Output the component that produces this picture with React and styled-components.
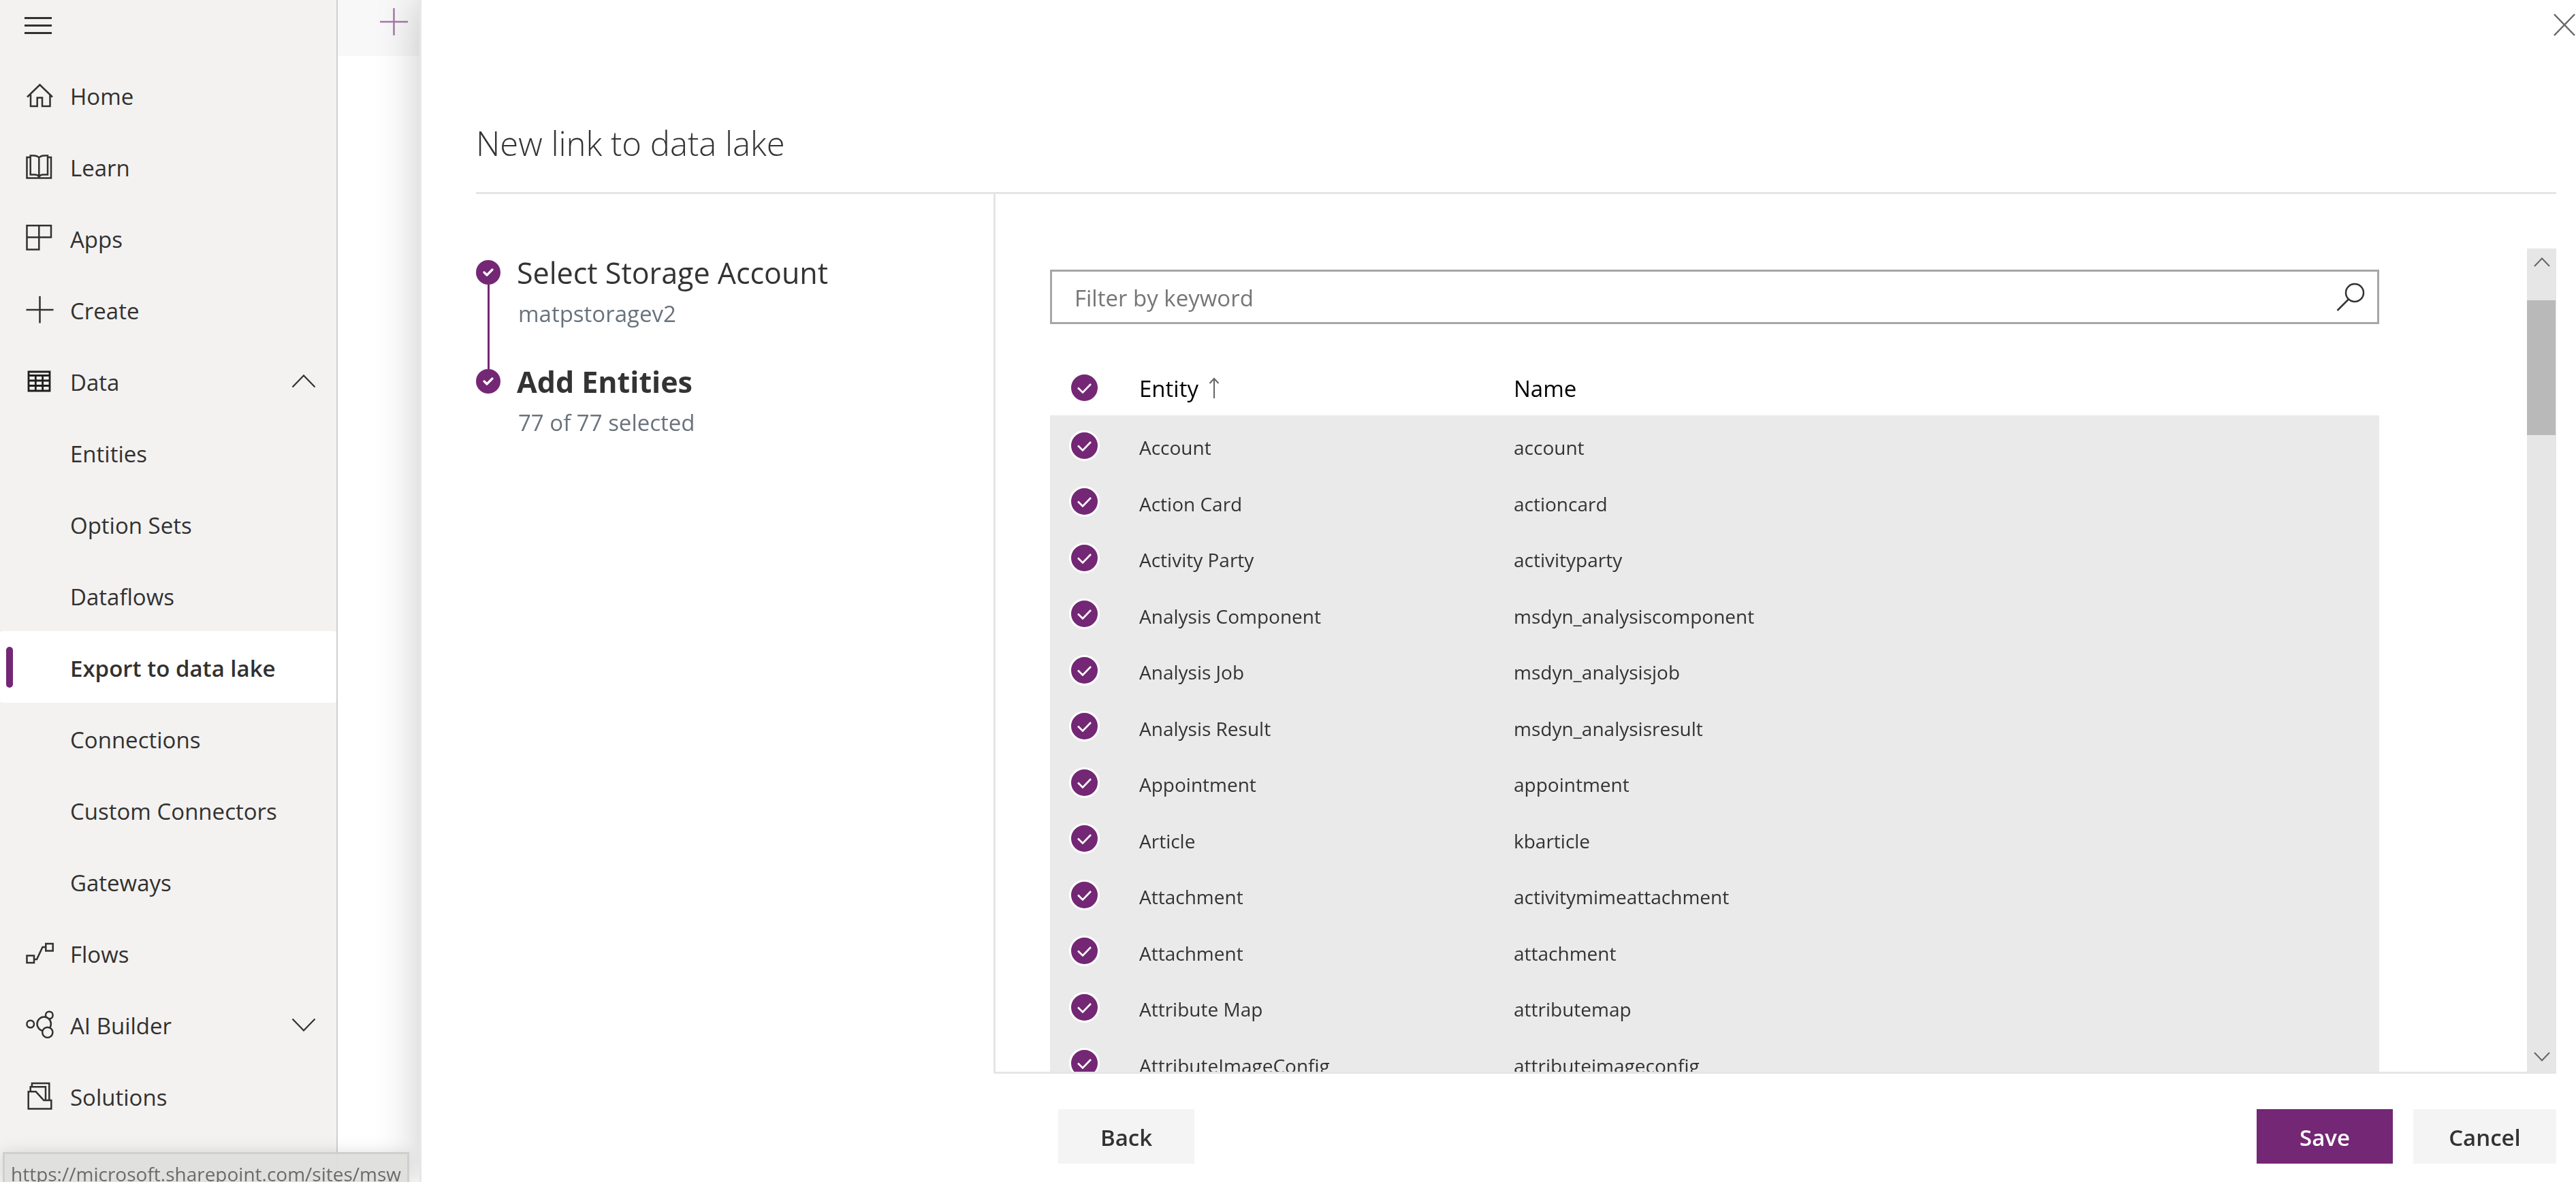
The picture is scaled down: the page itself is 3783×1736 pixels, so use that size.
import React from "react";
import styled, { createGlobalStyle } from "styled-components";

const GlobalStyle = createGlobalStyle`
  *, *::before, *::after { box-sizing: border-box; }
  html, body, #root { height: 100%; }
  body {
    margin: 0;
    overflow: hidden;
    background: #ffffff;
    color: #323130;
    font-family: "Open Sans", "Noto Sans", sans-serif;
    font-size: 33px;
  }
  button, input { font: inherit; color: inherit; }
  button { border: 0; padding: 0; background: none; cursor: pointer; }
  h1, h2, p, ul, ol { margin: 0; padding: 0; }
  ul, ol { list-style: none; }
`;

const Shell = styled.div`
  display: flex;
  height: 100vh;
`;

/* ---------- Sidebar ---------- */

const Sidebar = styled.nav`
  flex: none;
  width: 496px;
  border-right: 2px solid #d2d0ce;
  background: #f3f2f1;
`;

const MenuButton = styled.button`
  display: flex;
  align-items: center;
  width: 100%;
  height: 87px;
  padding: 0 0 12px 36px;
`;

const NavRow = styled.a`
  position: relative;
  display: flex;
  align-items: center;
  height: 105px;
  padding: 0 30px 0 38px;
  color: #323130;
  text-decoration: none;
  border-radius: 4px;
  background: ${(p) => (p.$selected ? "#ffffff" : "transparent")};
  font-weight: ${(p) => (p.$selected ? 600 : 400)};

  &::before {
    content: "";
    display: ${(p) => (p.$selected ? "block" : "none")};
    position: absolute;
    left: 9px;
    top: 23px;
    width: 10px;
    height: 60px;
    border-radius: 5px;
    background: #742774;
  }
`;

const NavIcon = styled.span`
  flex: none;
  display: flex;
  width: 65px;
`;

const NavLabel = styled.span`
  flex: 1;
  padding-top: 3px;
  white-space: nowrap;
`;

const Workspace = styled.main`
  flex: 1;
`;

const CommandBar = styled.div`
  height: 82px;
  padding: 10px 0 0 62px;
  background: #f8f8f8;
`;

/* ---------- Panel ---------- */

const Panel = styled.section`
  position: fixed;
  inset: 0 0 0 616px;
  display: flex;
  flex-direction: column;
  padding: 0 29px 27px 80px;
  border-left: 3px solid #e8e8e8;
  background: #ffffff;
  box-shadow: 0 0 60px rgba(0, 0, 0, 0.22);
`;

const CloseButton = styled.button`
  position: absolute;
  top: 20px;
  right: 1px;
  display: flex;
`;

const PanelHeader = styled.header`
  flex: none;
  height: 285px;
  padding-top: 176px;
  border-bottom: 3px solid #e5e5e5;
`;

const Title = styled.h1`
  font-size: 49px;
  line-height: 68px;
  font-weight: 300;
  color: #333333;
`;

const Body = styled.div`
  flex: 1;
  min-height: 0;
  display: flex;
`;

const Steps = styled.ol`
  flex: none;
  width: 760px;
  padding-top: 86px;
`;

const Step = styled.li`
  display: flex;
  gap: 24px;
  height: 160px;
`;

const StepRail = styled.div`
  display: flex;
  flex-direction: column;
  align-items: center;
  padding-top: 11px;
  margin-bottom: -11px;

  &::after {
    content: "";
    display: ${(p) => (p.$last ? "none" : "block")};
    flex: 1;
    width: 3px;
    background: #742774;
  }
`;

const StepTitle = styled.h2`
  font-size: 43px;
  line-height: 60px;
  font-weight: ${(p) => (p.$current ? 700 : 400)};
  color: #333333;
`;

const StepNote = styled.p`
  padding: 5px 0 0 2px;
  line-height: 50px;
  color: #69737d;
`;

const Content = styled.div`
  flex: 1;
  min-width: 0;
  display: flex;
  padding-top: 80px;
  border-left: 3px solid #e5e5e5;
  border-bottom: 3px solid #e5e5e5;
`;

const Scroller = styled.div`
  flex: 1;
  overflow: hidden;
  padding: 31px 217px 0 80px;
`;

const SearchBox = styled.label`
  display: flex;
  align-items: center;
  height: 80px;
  padding: 0 18px 0 33px;
  border: 3px solid #a6a6a6;
`;

const SearchInput = styled.input`
  flex: 1;
  border: 0;
  outline: 0;
  padding: 2px 0 0;
  background: transparent;
  &::placeholder { color: #767676; opacity: 1; }
`;

const Table = styled.table`
  width: 100%;
  margin-top: 54px;
  border-collapse: collapse;
  table-layout: fixed;
`;

const HeadCell = styled.th`
  width: ${(p) => p.$width};
  height: 80px;
  padding: 0;
  text-align: left;
  font-weight: 400;
  color: #000000;
`;

const HeadCheckCell = styled(HeadCell)`
  padding: 0 0 2px 28px;
`;

const HeadSort = styled.button`
  display: flex;
  align-items: center;
  gap: 15px;
`;

const Row = styled.tr`
  height: 82px;
  background: #eaeaea;
  font-size: 28px;
  color: #333333;
  &:nth-child(even) { height: 83px; }
`;

const CheckCell = styled.td`
  padding: 6px 0 0 28px;
`;

const Cell = styled.td`
  padding: 12px 0 0;
  white-space: nowrap;
`;

const CheckLabel = styled.label`
  display: grid;
  width: 45px;
  height: 45px;
  place-items: center;
  > * { grid-area: 1 / 1; }
  svg { pointer-events: none; }
`;

const CheckInput = styled.input`
  appearance: none;
  width: 45px;
  height: 45px;
  margin: 0;
  border: 3px solid #ffffff;
  border-radius: 50%;
  background: #742774;
`;

const Scrollbar = styled.div`
  flex: none;
  display: flex;
  flex-direction: column;
  width: 43px;
  background: #e6e6e6;
`;

const ScrollButton = styled.button`
  display: flex;
  justify-content: center;
  padding: ${(p) => (p.$down ? "0 0 14px" : "12px 0 0")};
  margin-top: ${(p) => (p.$down ? "auto" : "0")};
  height: ${(p) => (p.$down ? "auto" : "76px")};
`;

const Thumb = styled.div`
  height: 198px;
  margin-right: 1px;
  background: #b9b9b9;
`;

const Footer = styled.footer`
  flex: none;
  display: flex;
  gap: 30px;
  padding: 52px 0 0 855px;
`;

const Button = styled.button`
  width: ${(p) => p.$width};
  height: 80px;
  padding-top: 3px;
  font-weight: 600;
  margin-right: ${(p) => (p.$start ? "auto" : "0")};
  color: ${(p) => (p.$primary ? "#ffffff" : "#333333")};
  background: ${(p) => (p.$primary ? "#742774" : "#f4f4f4")};
`;

const StatusBubble = styled.div`
  position: fixed;
  left: 4px;
  bottom: 0;
  height: 44px;
  padding: 5px 9px 0;
  overflow: hidden;
  border: 3px solid #cfcfce;
  border-bottom: 0;
  background: rgba(222, 222, 221, 0.94);
  box-shadow: 0 0 24px rgba(0, 0, 0, 0.12);
  color: #6b6b6b;
  font-size: 28px;
  line-height: 48px;
  white-space: nowrap;
`;

/* ---------- Icons ---------- */

const Icon = ({ w = 41, h = 41, s = 2.5, color = "#323130", children }) => (
  <svg width={w} height={h} viewBox={`0 0 ${w} ${h}`} fill="none" stroke={color} strokeWidth={s} aria-hidden="true">
    {children}
  </svg>
);

const icons = {
  home: <Icon><path d="M7 20V37H16.7V24.5H24V37H35.5V20M2 23.5L20.5 5.5L39 23.5" /></Icon>,
  learn: (
    <Icon>
      <path d="M6.7 7H1.5V37.5H37V7H32" />
      <path d="M19.3 7.5C17 5 14 4.5 11 4.5H6.7V32.5H13C16 32.5 18 33.3 19.3 35.5C20.6 33.3 22.6 32.5 25.6 32.5H32V4.5H27.6C24.6 4.5 21.6 5 19.3 7.5ZM19.3 7.5V37" />
    </Icon>
  ),
  apps: <Icon><path d="M1.5 2.3H37V19.5H1.5ZM19.3 2.3V37.5H1.5V2.3" /></Icon>,
  create: <Icon><path d="M0.5 21H40.5M20.5 1V40.5" /></Icon>,
  data: <Icon s={2.8} color="#201f1e"><path d="M4 7H35V35H4ZM4 12.5H35M4 20H35M4 27.5H35M14.3 12.5V35M24.6 12.5V35" /></Icon>,
  flows: <Icon><path d="M1.5 24.5H12V35H1.5ZM29.3 7H39.7V17.5H29.3ZM12 30H16L24.5 12H29.3" /></Icon>,
  ai: (
    <Icon>
      <circle cx="6.7" cy="20" r="5.3" />
      <circle cx="34.3" cy="7" r="5.3" />
      <circle cx="26.7" cy="19.8" r="10.2" fill="#f3f2f1" />
      <circle cx="31.8" cy="32.3" r="7.6" fill="#f3f2f1" />
    </Icon>
  ),
  solutions: (
    <Icon>
      <path d="M3.7 14.3H14.7L26.3 27H37.3V39.6H3.7Z" />
      <path d="M6.7 14V7.3H29V27M8.9 7V2H34.3V27" />
    </Icon>
  ),
};

const Chevron = ({ down }) => (
  <Icon w={36} h={20} s={2.2}>
    <path d={down ? "M1.5 1.5L18 18.5L34.5 1.5" : "M1.5 18.5L18 1.5L34.5 18.5"} />
  </Icon>
);

const SmallChevron = ({ down }) => (
  <Icon w={26} h={16} s={2} color="#666666">
    <path d={down ? "M2 2L13 13.5L24 2" : "M2 14L13 2.5L24 14"} />
  </Icon>
);

const StepBadge = () => (
  <svg width="36" height="36" viewBox="0 0 36 36" aria-hidden="true">
    <circle cx="18" cy="18" r="18" fill="#742774" />
    <path
      d="M12 18L16 22L24 14"
      fill="none"
      stroke="#ffffff"
      strokeWidth="3.2"
      strokeLinecap="round"
      strokeLinejoin="round"
    />
  </svg>
);

/* ---------- Data ---------- */

const nav = [
  { label: "Home", icon: "home" },
  { label: "Learn", icon: "learn" },
  { label: "Apps", icon: "apps" },
  { label: "Create", icon: "create" },
  { label: "Data", icon: "data", chevron: "up" },
  { label: "Entities" },
  { label: "Option Sets" },
  { label: "Dataflows" },
  { label: "Export to data lake", selected: true },
  { label: "Connections" },
  { label: "Custom Connectors" },
  { label: "Gateways" },
  { label: "Flows", icon: "flows" },
  { label: "AI Builder", icon: "ai", chevron: "down" },
  { label: "Solutions", icon: "solutions" },
];

const entities = [
  ["Account", "account"],
  ["Action Card", "actioncard"],
  ["Activity Party", "activityparty"],
  ["Analysis Component", "msdyn_analysiscomponent"],
  ["Analysis Job", "msdyn_analysisjob"],
  ["Analysis Result", "msdyn_analysisresult"],
  ["Appointment", "appointment"],
  ["Article", "kbarticle"],
  ["Attachment", "activitymimeattachment"],
  ["Attachment", "attachment"],
  ["Attribute Map", "attributemap"],
  ["AttributeImageConfig", "attributeimageconfig"],
];

const RoundCheck = ({ label }) => (
  <CheckLabel>
    <CheckInput type="checkbox" defaultChecked aria-label={label} />
    <Icon w={21} h={17} s={2.6} color="#ffffff">
      <path d="M1 8.5L8 15.5L20 3" />
    </Icon>
  </CheckLabel>
);

export default function App() {
  return (
    <>
      <GlobalStyle />
      <Shell>
        <Sidebar aria-label="Main">
          <MenuButton aria-label="Toggle navigation">
            <Icon w={40} h={25} s={3}><path d="M0 1.5H40M0 12.5H40M0 23.5H40" /></Icon>
          </MenuButton>
          <ul>
            {nav.map((item) => (
              <li key={item.label}>
                <NavRow href="#" $selected={item.selected}>
                  <NavIcon>{icons[item.icon]}</NavIcon>
                  <NavLabel>{item.label}</NavLabel>
                  {item.chevron && <Chevron down={item.chevron === "down"} />}
                </NavRow>
              </li>
            ))}
          </ul>
        </Sidebar>
        <Workspace>
          <CommandBar>
            <button aria-label="New link">
              <Icon w={42} h={42} color="#a67aa9"><path d="M0 22H41M20.5 2V42" /></Icon>
            </button>
          </CommandBar>
        </Workspace>
      </Shell>

      <Panel aria-label="New link to data lake">
        <CloseButton aria-label="Close">
          <Icon w={32} h={33} color="#666666"><path d="M1 1L31 32M31 1L1 32" /></Icon>
        </CloseButton>
        <PanelHeader>
          <Title>New link to data lake</Title>
        </PanelHeader>
        <Body>
          <Steps>
            <Step>
              <StepRail><StepBadge /></StepRail>
              <div>
                <StepTitle>Select Storage Account</StepTitle>
                <StepNote>matpstoragev2</StepNote>
              </div>
            </Step>
            <Step>
              <StepRail $last><StepBadge /></StepRail>
              <div>
                <StepTitle $current>Add Entities</StepTitle>
                <StepNote>77 of 77 selected</StepNote>
              </div>
            </Step>
          </Steps>
          <Content>
            <Scroller>
              <SearchBox>
                <SearchInput type="text" placeholder="Filter by keyword" aria-label="Filter by keyword" />
                <Icon w={42} h={42} color="#333333">
                  <circle cx="27" cy="15" r="13" />
                  <path d="M18 24.5L1.5 41" />
                </Icon>
              </SearchBox>
              <Table>
                <thead>
                  <tr>
                    <HeadCheckCell $width="131px">
                      <RoundCheck label="Select all" />
                    </HeadCheckCell>
                    <HeadCell $width="550px">
                      <HeadSort>
                        Entity
                        <Icon w={16} h={32} s={2} color="#666666"><path d="M8 1.5V31M1.5 9L8 2L14.5 9" /></Icon>
                      </HeadSort>
                    </HeadCell>
                    <HeadCell>Name</HeadCell>
                  </tr>
                </thead>
                <tbody>
                  {entities.map(([entity, name]) => (
                    <Row key={name}>
                      <CheckCell><RoundCheck label={`Select ${entity}`} /></CheckCell>
                      <Cell>{entity}</Cell>
                      <Cell>{name}</Cell>
                    </Row>
                  ))}
                </tbody>
              </Table>
            </Scroller>
            <Scrollbar>
              <ScrollButton aria-label="Scroll up"><SmallChevron /></ScrollButton>
              <Thumb />
              <ScrollButton $down aria-label="Scroll down"><SmallChevron down /></ScrollButton>
            </Scrollbar>
          </Content>
        </Body>
        <Footer>
          <Button $width="200px" $start>Back</Button>
          <Button $width="200px" $primary>Save</Button>
          <Button $width="210px">Cancel</Button>
        </Footer>
      </Panel>

      <StatusBubble>https://microsoft.sharepoint.com/sites/msw</StatusBubble>
    </>
  );
}
